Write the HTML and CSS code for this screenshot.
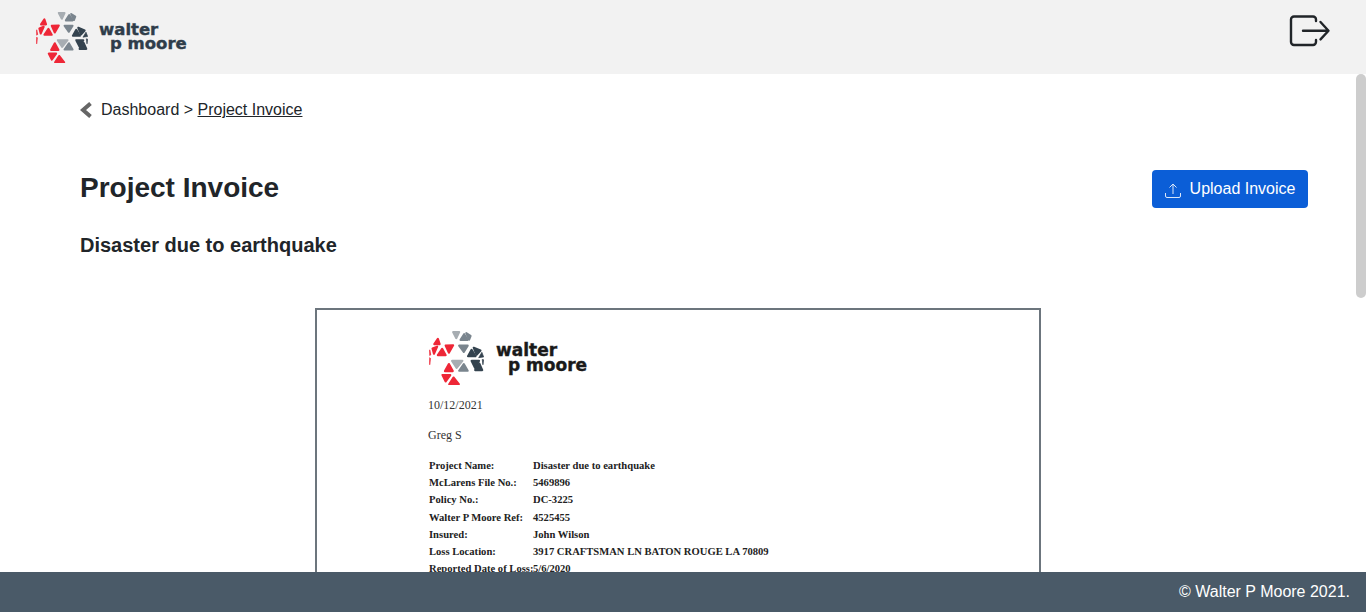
FILE: index.html
```html
<!DOCTYPE html>
<html lang="en">
<head>
    <meta charset="UTF-8">
    <title>Project Invoice</title>
    <link rel="stylesheet" href="styles.css">
</head>
<body>
    <svg class="defs" width="0" height="0">
        <symbol id="mark" viewBox="48 33 155 152">
            <g fill="#ee2737" stroke="#ee2737">
                <polygon points="63,70 73,55 78,70"/>
                <polygon points="95,74 116,73 104,94"/>
                <polygon points="85,83 95,101 73,101"/>
                <polygon points="58,82 71,77 62,97"/>
                <polygon points="104,126 115,146 93,146"/>
                <polygon points="86,157 108,157 95,175"/>
                <polygon points="117,164 132,183 105,183"/>
            </g>
            <g class="sliver" fill="#ee2737" stroke="#ee2737">
                <polygon points="50,86 53,100 50,102"/>
                <polygon points="50,108 52,110 50,128"/>
            </g>
            <g fill="#a7adb2" stroke="#a7adb2">
                <polygon points="116,36 133,36 125,53"/>
                <polygon points="113,117 142,117 126,137"/>
            </g>
            <g fill="#7a858e" stroke="#7a858e">
                <polygon points="147,42 157,58 137,58"/>
                <polygon points="133,74 157,74 146,92"/>
                <polygon points="153,39 165,47 161,57"/>
                <polygon points="146,126 157,145 133,145"/>
            </g>
            <g fill="#34434f" stroke="#34434f">
                <polygon points="174,80 193,88 182,100"/>
                <polygon points="168,86 179,104 158,104"/>
                <polygon points="168,117 189,117 178,137"/>
                <polygon points="190,125 198,143 178,143"/>
            </g>
            <g class="sliver" fill="#34434f" stroke="#34434f">
                <polygon points="197,93 202,106 188,108"/>
                <polygon points="198,113 202,114 200,128"/>
            </g>
        </symbol>
    </svg>

    <div class="header">
        <div class="logo">
            <svg class="logo-mark"><use href="#mark"/></svg>
            <div class="wordmark">
                <span>walter</span>
                <span class="indent">p moore</span>
            </div>
        </div>
        <svg class="logout" viewBox="0 0 44 34" fill="none" stroke="#212529" stroke-width="2.4" stroke-linecap="round" stroke-linejoin="round">
            <path d="M28 7V5.500a3 3 0 0 0-3-3H6a3 3 0 0 0-3 3V28a3 3 0 0 0 3 3h19a3 3 0 0 0 3-3v-2"/>
            <path d="M15 16.700h25M32.500 8l8 8.700-8 8.700"/>
        </svg>
    </div>

    <div class="page">
        <div class="main">
            <div class="breadcrumb">
                <svg class="back" viewBox="0 0 13 16"><path d="M10.500 1.500 3 8l7.500 6.500" fill="none" stroke="#666" stroke-width="4"/></svg>
                <span>Dashboard &gt; <a href="#">Project Invoice</a></span>
            </div>

            <div class="title-row">
                <h1>Project Invoice</h1>
                <button class="upload-btn">
                    <svg viewBox="0 0 16 15" fill="none" stroke="#fff" stroke-width="1" opacity="0.85">
                        <path d="M8 11V1M4.500 4.500 8 1l3.500 3.500"/>
                        <path d="M.5 10v3a1.500 1.500 0 0 0 1.500 1.500h12a1.500 1.500 0 0 0 1.500-1.500v-3"/>
                    </svg>
                    Upload Invoice
                </button>
            </div>

            <h2>Disaster due to earthquake</h2>

            <!-- invoice preview -->
            <div class="invoice">
                <div class="logo doc-logo">
                    <svg class="logo-mark"><use href="#mark"/></svg>
                    <div class="wordmark">
                        <span>walter</span>
                        <span class="indent">p moore</span>
                    </div>
                </div>
                <p class="date">10/12/2021</p>
                <p class="name">Greg S</p>
                <div class="details">
                    <span>Project Name:</span><span>Disaster due to earthquake</span>
                    <span>McLarens File No.:</span><span>5469896</span>
                    <span>Policy No.:</span><span>DC-3225</span>
                    <span>Walter P Moore Ref:</span><span>4525455</span>
                    <span>Insured:</span><span>John Wilson</span>
                    <span>Loss Location:</span><span>3917 CRAFTSMAN LN BATON ROUGE LA 70809</span>
                    <span>Reported Date of Loss:</span><span>5/6/2020</span>
                </div>
            </div>
        </div>
        <div class="scrollbar"><div class="thumb"></div></div>
    </div>

    <div class="footer">© Walter P Moore 2021.</div>
</body>
</html>
```

FILE: styles.css
```css
body {
    margin: 0;
    height: 100vh;
    overflow: hidden;
    display: flex;
    flex-direction: column;
    position: relative;
    font-family: 'Liberation Sans', Arial, sans-serif;
    color: #212529;
    background: #fff;
}

.defs {
    position: absolute;
}

.header {
    flex: none;
    height: 74px;
    box-sizing: border-box;
    padding: 0 34px 0 36px;
    background: #f2f2f2;
    display: flex;
    align-items: center;
    justify-content: space-between;
}

.logo {
    display: flex;
    align-items: center;
}

.logo-mark {
    width: 52px;
    height: 51px;
    stroke-width: 6;
    stroke-linejoin: round;
    filter: blur(0.25px);
}

.sliver {
    stroke-width: 2;
}

.wordmark {
    margin-left: 11px;
    font-family: 'DejaVu Sans', sans-serif;
    font-weight: 700;
    font-size: 16.500px;
    line-height: 14px;
    color: #2f3d4a;
    -webkit-text-stroke: 0.4px #2f3d4a;
    display: flex;
    flex-direction: column;
}

.indent {
    padding-left: 11px;
}

.logout {
    align-self: flex-start;
    width: 44px;
    height: 34px;
    margin-top: 14px;
}

.page {
    flex: 1;
    min-height: 0;
    display: flex;
}

.main {
    flex: 1;
    min-width: 0;
    overflow: hidden;
    padding: 0 48px 0 80px;
}

/* page scrollbar, runs under the footer */
.scrollbar {
    flex: none;
    width: 10px;
}

.thumb {
    height: 224px;
    background: #cdcdcd;
    border-radius: 5px;
}

.breadcrumb {
    display: flex;
    align-items: center;
    gap: 8px;
    padding-top: 26px;
    height: 20px;
    font-size: 16px;
    line-height: 20px;
}

.breadcrumb a {
    color: #212529;
}

.back {
    width: 13px;
    height: 16px;
}

.title-row {
    display: flex;
    align-items: center;
    justify-content: space-between;
    margin-top: 50px;
}

h1 {
    margin: -2px 0 0;
    font-size: 28px;
    line-height: 38px;
    font-weight: 700;
}

.upload-btn {
    width: 156px;
    height: 38px;
    border: none;
    border-radius: 4px;
    background: #0b5ed7;
    color: #fff;
    font-family: inherit;
    font-size: 16px;
    display: flex;
    align-items: center;
    justify-content: center;
    gap: 9px;
    padding: 0;
}

.upload-btn svg {
    width: 16px;
    height: 15px;
    margin-top: 2px;
}

h2 {
    margin: 25px 0 0;
    font-size: 20px;
    line-height: 24px;
    font-weight: 700;
}

.invoice {
    width: 610px;
    height: 1000px;
    margin: 51px 0 58px 235px;
    border: 2px solid #6c757d;
    padding: 21px 0 0 112px;
    font-family: 'Liberation Serif', 'Times New Roman', serif;
    font-size: 12px;
    color: #333;
}

.doc-logo .logo-mark {
    width: 55px;
    height: 54px;
}

.doc-logo .wordmark {
    margin-left: 12px;
    font-size: 17px;
    line-height: 15px;
    color: #1a1a1a;
    -webkit-text-stroke: 0.4px #1a1a1a;
}

.doc-logo .indent {
    padding-left: 12px;
}

.date {
    margin: 13px 0 0 -1px;
    line-height: 14px;
}

.name {
    margin: 16px 0 0 -1px;
    line-height: 14px;
}

.details {
    margin-top: 15px;
    display: grid;
    grid-template-columns: 104px 1fr;
    grid-auto-rows: 17.200px;
    font-size: 10.600px;
    font-weight: 700;
    line-height: 17px;
    color: #222;
    white-space: nowrap;
}

.footer {
    position: absolute;
    left: 0;
    right: 0;
    bottom: 0;
    height: 40px;
    background: #4a5a68;
    color: #fff;
    font-size: 16px;
    line-height: 40px;
    text-align: right;
    padding-right: 16px;
}
```
